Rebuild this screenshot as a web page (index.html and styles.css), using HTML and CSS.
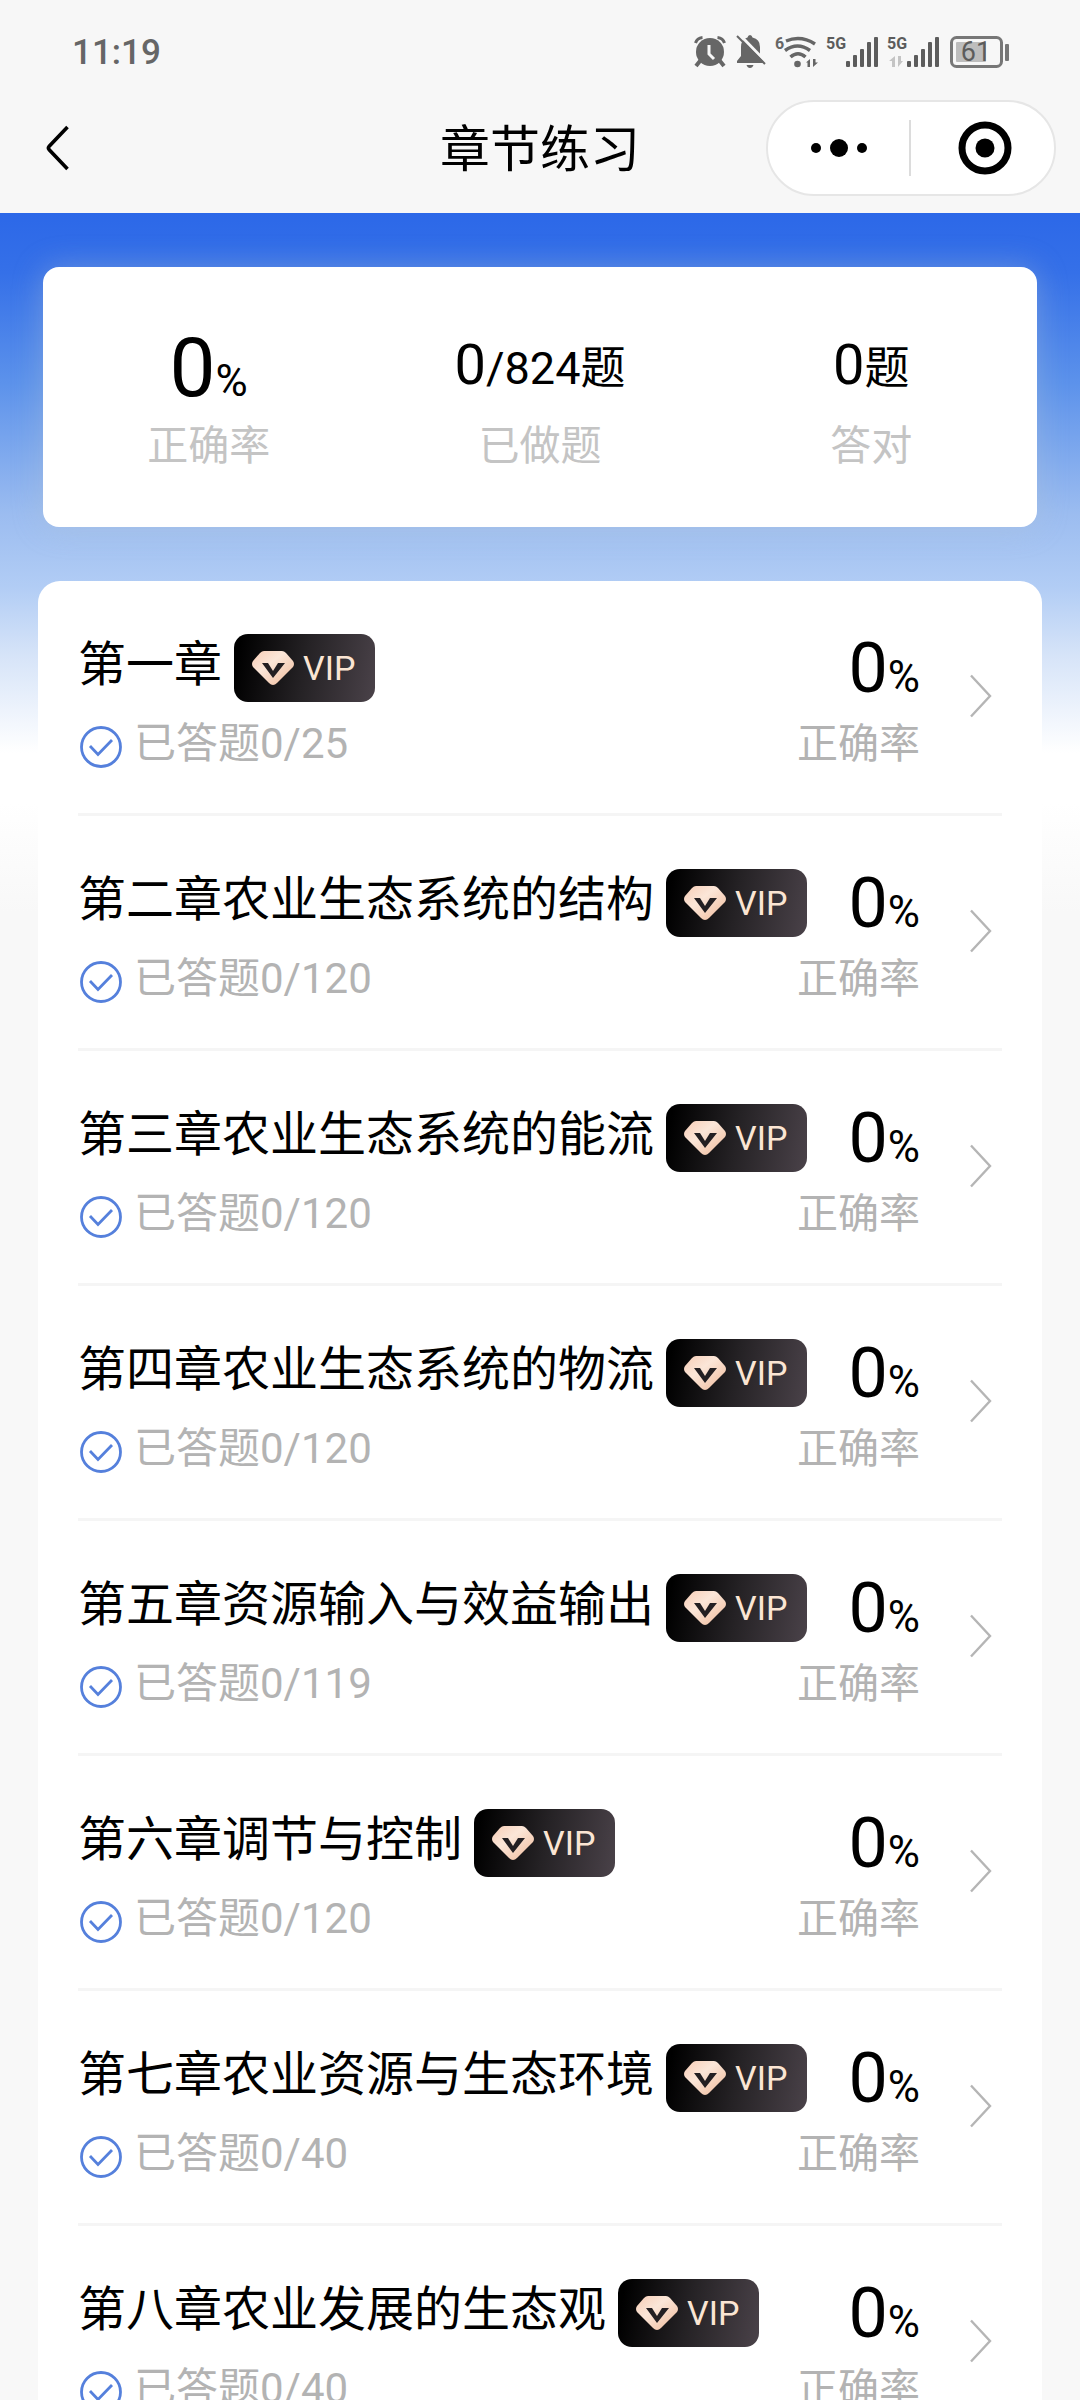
FILE: index.html
```html
<!DOCTYPE html>
<html lang="zh-CN">
<head>
<meta charset="utf-8">
<meta name="viewport" content="width=device-width, initial-scale=1">
<title>章节练习</title>
<link rel="stylesheet" href="styles.css">
</head>
<body>
<svg class="defs" width="0" height="0" aria-hidden="true">
  <defs>
    <linearGradient id="gem" x1="0" y1="0" x2="1" y2="1">
      <stop offset="0" stop-color="#f7cdb6"/><stop offset=".4" stop-color="#fbe6d8"/><stop offset="1" stop-color="#efb999"/>
    </linearGradient>
    <symbol id="i-gem" viewBox="0 0 42 34">
      <path d="M12 0h18q2 0 4 2l7 8q2 3 0 6L25 32q-4 4-8 0L1 16q-2-3 0-6l7-8q2-2 4-2z" fill="url(#gem)"/>
      <path d="M10 12h6l5 8 5-8h7L21 27z" fill="#231f22"/>
    </symbol>
    <symbol id="i-check" viewBox="0 0 42 42">
      <circle cx="21" cy="21" r="19.5" fill="none" stroke="#5580dc" stroke-width="2.8"/>
      <path d="M10 20l8 8.500L32 14" fill="none" stroke="#5580dc" stroke-width="2.8"/>
    </symbol>
    <symbol id="i-next" viewBox="0 0 22 44">
      <path d="M1 1.500L20 22 1 42.500" fill="none" stroke="#b5b5b5" stroke-width="2.400"/>
    </symbol>
  </defs>
</svg>

<div class="status">
  <time class="clock">11:19</time>
  <div class="status-icons">
    <svg width="34" height="34" viewBox="0 0 34 34" fill="#666">
      <circle cx="17" cy="17" r="14"/>
      <path d="M2.500 8Q4 3 9.500 2.500M24.500 2.500Q30 3 31.500 8" fill="none" stroke="#666" stroke-width="3"/>
      <path d="M7 26l-4 5M27 26l4 5" stroke="#666" stroke-width="4"/>
      <path d="M16 10v9l5 5" fill="none" stroke="#f7f7f7" stroke-width="3"/>
    </svg>
    <svg width="30" height="34" viewBox="0 0 30 34" fill="#666">
      <path d="M14 0q2 0 2.500 2.500Q24 4 24 12v9l3.500 5v2H1v-2l4-5v-9q0-7.500 6.500-9.500Q12 0 14 0zM10.500 30h7q-1 3-3.500 3t-3.500-3z"/>
      <path d="M3-1l28 29" stroke="#f7f7f7" stroke-width="3"/>
      <path d="M1 1l28 28" stroke="#666" stroke-width="2"/>
    </svg>
    <svg width="44" height="34" viewBox="0 0 44 34" fill="#666">
      <text x="0" y="14" class="net">6</text>
      <path d="M11 6q15-6 29 3M10 15.500q12.500-9 25 0M15.500 22q7.500-6.500 15 0" fill="none" stroke="#666" stroke-width="3.500"/>
      <circle cx="22.500" cy="29" r="3.300"/>
      <path d="M35 24v8h-2.500v-4.500H31zM38 24v8l5-4.500h-2.500V24z"/>
    </svg>
    <svg width="52" height="34" viewBox="0 0 52 34" fill="#5c5c5c">
      <text x="-2" y="14" class="net">5G</text>
      <rect x="18" y="26" width="4" height="6" rx="1"/><rect x="25" y="20" width="4" height="12" rx="1"/><rect x="32" y="14" width="4" height="18" rx="1"/><rect x="39" y="7" width="4" height="25" rx="1"/><rect x="46" y="2" width="4" height="30" rx="1"/>
    </svg>
    <svg width="52" height="34" viewBox="0 0 52 34" fill="#5c5c5c">
      <text x="-2" y="14" class="net">5G</text>
      <path d="M6 21v11H3v-6H0zM9 21v11l5-6h-2v-5z" fill="#c4c4c4"/>
      <rect x="18" y="26" width="4" height="6" rx="1"/><rect x="25" y="20" width="4" height="12" rx="1"/><rect x="32" y="14" width="4" height="18" rx="1"/><rect x="39" y="7" width="4" height="25" rx="1"/><rect x="46" y="2" width="4" height="30" rx="1"/>
    </svg>
    <svg width="60" height="34" viewBox="0 0 60 34">
      <rect x="1.500" y="2.500" width="50" height="29" rx="5" fill="none" stroke="#777" stroke-width="3"/>
      <rect x="6" y="7" width="30" height="20" rx="1" fill="#bdbdbd"/>
      <rect x="55" y="9" width="4" height="17" rx="1" fill="#777"/>
      <text x="26" y="26" class="charge">61</text>
    </svg>
  </div>
</div>

<header class="bar">
  <button class="back" type="button" aria-label="返回">
    <svg width="24" height="46" viewBox="0 0 24 46"><path d="M21.500 2L3 21.500q-1.200 1.500 0 3L21.500 44" fill="none" stroke="#000" stroke-width="3.600"/></svg>
  </button>
  <h1 class="title">章节练习</h1>
  <div class="capsule">
    <button class="more" type="button" aria-label="更多">
      <svg width="58" height="54" viewBox="0 0 58 54"><circle cx="6" cy="27" r="5"/><circle cx="29" cy="27" r="9"/><circle cx="52" cy="27" r="5"/></svg>
    </button>
    <button class="close" type="button" aria-label="关闭">
      <svg width="54" height="54" viewBox="0 0 54 54"><circle cx="27" cy="27" r="23" fill="none" stroke="#000" stroke-width="7"/><circle cx="27" cy="27" r="9.500"/></svg>
    </button>
  </div>
</header>

<main class="page">
  <section class="stats">
    <div class="stat"><p class="value lead"><b>0</b>%</p><p class="label">正确率</p></div>
    <div class="stat"><p class="value"><b>0</b>/824题</p><p class="label">已做题</p></div>
    <div class="stat"><p class="value"><b>0</b>题</p><p class="label">答对</p></div>
  </section>
  <ul class="chapters" id="chapters"></ul>
</main>
<script src="script.js"></script>
</body>
</html>
```
FILE: styles.css
```css
* { box-sizing: border-box; }

body {
  margin: 0;
  background: #f8f8f8;
  color: #000;
  font-family: Roboto, "Noto Sans CJK SC", sans-serif;
  overflow-x: hidden;
}

h1, h2, p, ul { margin: 0; padding: 0; font-weight: 400; }
b { font-weight: 400; }
button { border: 0; background: none; padding: 0; }
svg { display: block; flex: none; }
.defs { position: absolute; }

.status {
  display: flex;
  justify-content: space-between;
  align-items: center;
  height: 100px;
  padding: 4px 70px 0 72px;
  background: #f7f7f7;
}
.clock { font-size: 35px; font-weight: 500; color: #666; }
.status-icons { display: flex; gap: 9px; }
.status-icons svg { overflow: visible; }
.net { font: 700 16px Roboto, sans-serif; }
.charge { font: 400 27px Roboto, sans-serif; fill: #5c5c5c; text-anchor: middle; }

.bar {
  display: grid;
  grid-template-columns: 1fr auto 1fr;
  align-items: center;
  height: 113px;
  padding: 0 24px 18px 46px;
  background: #f7f7f7;
}
.back { justify-self: start; }
.title { font-size: 50px; line-height: 72px; padding: 3px 22px 0 0; }
.capsule {
  justify-self: end;
  display: flex;
  width: 290px;
  height: 96px;
  border: 2px solid #e6e6e6;
  border-radius: 48px;
  background: #fff;
}
.capsule button { display: grid; place-items: center; }
.capsule .more { width: 141px; }
.capsule .close { flex: 1; position: relative; padding-left: 6px; }
.close::before {
  content: "";
  position: absolute;
  left: 0;
  top: 18px;
  bottom: 18px;
  width: 2px;
  background: #dcdcdc;
}

.page {
  padding: 54px 38px 0;
  background: linear-gradient(#2c68e8 0, #3570e8 60px, #5c92eb 170px, #9bbcf0 300px, #b2cdf5 375px, #d5e3f8 440px, #fff 540px, #fff 590px, #f8f8f8 700px);
}

.stats {
  display: flex;
  margin: 0 5px 54px;
  height: 260px;
  padding-top: 49px;
  border-radius: 16px;
  background: #fff;
  box-shadow: 0 0 30px rgba(178, 195, 210, .4);
  text-align: center;
}
.stat { flex: 1; }
.value { height: 100px; font-size: 45px; line-height: 98px; }
.value b { font-size: 56px; }
.lead { font-size: 44px; line-height: 105px; }
.lead b { font-size: 82px; }
.label { font-size: 41px; line-height: 60px; color: #c4c4c4; }

.chapters {
  list-style: none;
  padding: 0 40px;
  border-radius: 22px 22px 0 0;
  background: #fff;
}
.chapter { border-bottom: 3px solid #f5f5f5; }
.chapter a {
  display: flex;
  height: 232px;
  padding-top: 49px;
  color: inherit;
  text-decoration: none;
  white-space: nowrap;
}
.info { flex: 1; min-width: 0; }
.name, .rate { display: flex; height: 84px; }
.name { gap: 12px; }
.name h2 { font-size: 48px; line-height: 70px; }
.vip {
  display: flex;
  flex: none;
  align-items: center;
  gap: 9px;
  height: 68px;
  width: 141px;
  margin-top: 4px;
  padding-left: 18px;
  border-radius: 14px;
  background: linear-gradient(100deg, #000 5%, #252225 50%, #4a4249);
  color: #fbe5d3;
  font-size: 34px;
}
.done, .acc { font-size: 41px; line-height: 60px; color: #b3b3b3; }
.done { display: flex; gap: 12px; padding-left: 2px; font-size: 42px; }
.done svg { margin-top: 12px; }
.rate { justify-content: flex-end; align-items: baseline; font-size: 44px; line-height: 76px; }
.rate b { font-size: 70px; }
.next { margin: 44px 10px 0 50px; }
```
FILE: script.js
```js
const chapters = [
  ["第一章", 25],
  ["第二章农业生态系统的结构", 120],
  ["第三章农业生态系统的能流", 120],
  ["第四章农业生态系统的物流", 120],
  ["第五章资源输入与效益输出", 119],
  ["第六章调节与控制", 120],
  ["第七章农业资源与生态环境", 40],
  ["第八章农业发展的生态观", 40]
];

document.getElementById("chapters").innerHTML = chapters.map(([name, total]) => `
  <li class="chapter"><a href="#">
    <div class="info">
      <div class="name"><h2>${name}</h2><span class="vip"><svg width="42" height="34"><use href="#i-gem"/></svg>VIP</span></div>
      <p class="done"><svg width="42" height="42"><use href="#i-check"/></svg>已答题0/${total}</p>
    </div>
    <div class="score">
      <p class="rate"><b>0</b>%</p>
      <p class="acc">正确率</p>
    </div>
    <svg class="next" width="22" height="44"><use href="#i-next"/></svg>
  </a></li>`).join("");
```
